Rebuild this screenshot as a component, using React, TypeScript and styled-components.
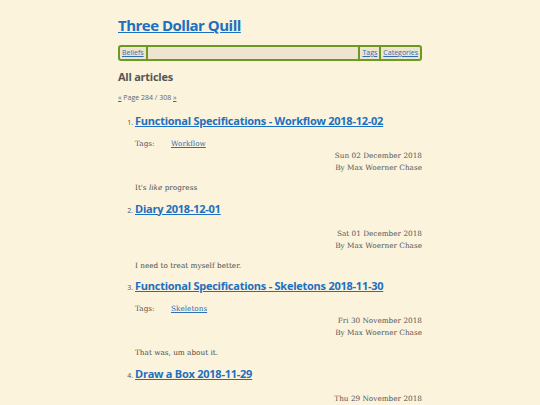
import styled, { createGlobalStyle } from "styled-components";

const GlobalStyle = createGlobalStyle`
    html, body {
        margin: 0;
        padding: 0;
        background: #fbf3dc;
    }
    body {
        font-family: "DejaVu Serif", "Liberation Serif", serif;
        color: #555;
    }
`;

const Page = styled.div`
    width: 304px;
    margin: 0 auto;
    padding-top: 15px;
`;

const SiteTitle = styled.h1`
    margin: 0;
    font-family: "Open Sans", "Noto Sans", sans-serif;
    font-size: 15px;
    font-weight: 700;
    line-height: 20px;
    letter-spacing: -0.5px;
    a {
        color: #1d6fc0;
    }
`;

const Nav = styled.nav`
    margin-top: 10px;
    display: flex;
    align-items: stretch;
    height: 12px;
    border: 2px solid #6b9a22;
    border-radius: 3px;
    background: #ede5cf;
    font-family: "Open Sans", "Noto Sans", sans-serif;
    font-size: 7px;
    line-height: 12px;
`;

const NavLink = styled.a<{ $left?: boolean }>`
    color: #2f6fb0;
    padding: 0 2px;
    border-left: ${(p) => (p.$left ? "none" : "2px solid #6b9a22")};
    border-right: ${(p) => (p.$left ? "2px solid #6b9a22" : "none")};
`;

const NavSpacer = styled.div`
    flex: 1;
`;

const Heading = styled.h2`
    margin: 8px 0 0;
    font-family: "Open Sans", "Noto Sans", sans-serif;
    font-size: 11px;
    font-weight: 700;
    line-height: 16px;
    letter-spacing: -0.25px;
    color: #555;
`;

const Pager = styled.p`
    margin: 8px 0 0;
    font-family: "Open Sans", "Noto Sans", sans-serif;
    font-size: 7px;
    line-height: 10px;
    color: #666;
    a {
        color: #2f6fb0;
    }
`;

const List = styled.ol`
    margin: 7px 0 0;
    padding-left: 17px;
    list-style: decimal;
`;

const Item = styled.li`
    margin-bottom: 3.5px;
    font-family: "Open Sans", "Noto Sans", sans-serif;
    font-size: 7px;
    color: #555;
`;

const ItemTitle = styled.h3`
    display: inline;
    margin: 0;
    font-family: "Open Sans", "Noto Sans", sans-serif;
    font-size: 11px;
    font-weight: 700;
    line-height: 22px;
    letter-spacing: -0.25px;
    a {
        color: #1d6fc0;
    }
`;

const Tags = styled.div`
    display: flex;
    margin-top: 6px;
    font-family: "DejaVu Serif", serif;
    font-size: 7.3px;
    line-height: 12px;
    span {
        width: 36px;
    }
    a {
        color: #2f6fb0;
    }
`;

const Meta = styled.div<{ $first?: boolean }>`
    text-align: right;
    margin-top: ${(p) => (p.$first ? "8px" : "0")};
    font-family: "DejaVu Serif", serif;
    font-size: 7.3px;
    line-height: 12px;
`;

const Summary = styled.p`
    margin: 8px 0 0;
    font-family: "DejaVu Serif", serif;
    font-size: 7.3px;
    line-height: 12px;
    color: #4d4d4d;
`;

interface IArticle {
    title: string;
    tag?: string;
    date: string;
    summary: React.ReactNode;
}

const articles: IArticle[] = [
    {
        title: "Functional Specifications - Workflow 2018-12-02",
        tag: "Workflow",
        date: "Sun 02 December 2018",
        summary: (
            <>
                It's <em>like</em> progress
            </>
        ),
    },
    {
        title: "Diary 2018-12-01",
        date: "Sat 01 December 2018",
        summary: "I need to treat myself better.",
    },
    {
        title: "Functional Specifications - Skeletons 2018-11-30",
        tag: "Skeletons",
        date: "Fri 30 November 2018",
        summary: "That was, um about it.",
    },
    {
        title: "Draw a Box 2018-11-29",
        date: "Thu 29 November 2018",
        summary: "",
    },
];

function App() {
    return (
        <>
            <GlobalStyle />
            <Page>
                <SiteTitle>
                    <a href="#">Three Dollar Quill</a>
                </SiteTitle>
                <Nav>
                    <NavLink href="#" $left>
                        Beliefs
                    </NavLink>
                    <NavSpacer />
                    <NavLink href="#">Tags</NavLink>
                    <NavLink href="#">Categories</NavLink>
                </Nav>
                <Heading>All articles</Heading>
                <Pager>
                    <a href="#">«</a> Page 284 / 308 <a href="#">»</a>
                </Pager>
                <List>
                    {articles.map((a) => (
                        <Item key={a.title}>
                            <ItemTitle>
                                <a href="#">{a.title}</a>
                            </ItemTitle>
                            {a.tag && (
                                <Tags>
                                    <span>Tags:</span>
                                    <a href="#">{a.tag}</a>
                                </Tags>
                            )}
                            <Meta $first={!a.tag}>{a.date}</Meta>
                            <Meta>By Max Woerner Chase</Meta>
                            {a.summary && <Summary>{a.summary}</Summary>}
                        </Item>
                    ))}
                </List>
            </Page>
        </>
    );
}

export default App;
